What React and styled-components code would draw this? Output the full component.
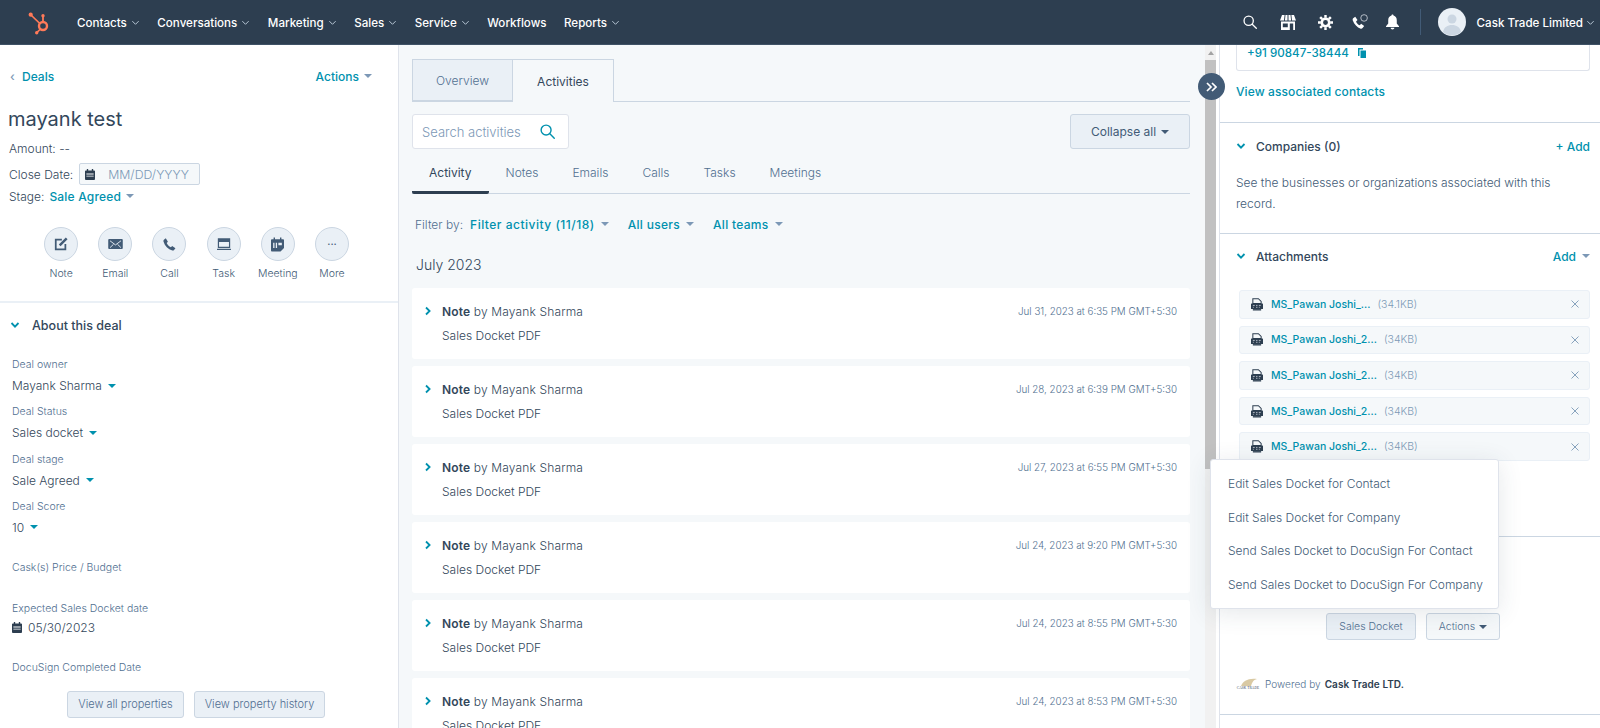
import React from 'react';
import styled, { createGlobalStyle } from 'styled-components';

const navItems = [
  { label: 'Contacts', menu: true },
  { label: 'Conversations', menu: true },
  { label: 'Marketing', menu: true },
  { label: 'Sales', menu: true },
  { label: 'Service', menu: true },
  { label: 'Workflows', menu: false },
  { label: 'Reports', menu: true },
];

const notes = [
  'Jul 31, 2023 at 6:35 PM GMT+5:30',
  'Jul 28, 2023 at 6:39 PM GMT+5:30',
  'Jul 27, 2023 at 6:55 PM GMT+5:30',
  'Jul 24, 2023 at 9:20 PM GMT+5:30',
  'Jul 24, 2023 at 8:55 PM GMT+5:30',
  'Jul 24, 2023 at 8:53 PM GMT+5:30',
];

const files = [
  { name: 'MS_Pawan Joshi_...', size: '(34.1KB)' },
  { name: 'MS_Pawan Joshi_2...', size: '(34KB)' },
  { name: 'MS_Pawan Joshi_2...', size: '(34KB)' },
  { name: 'MS_Pawan Joshi_2...', size: '(34KB)' },
  { name: 'MS_Pawan Joshi_2...', size: '(34KB)' },
];

const menuItems = [
  'Edit Sales Docket for Contact',
  'Edit Sales Docket for Company',
  'Send Sales Docket to DocuSign For Contact',
  'Send Sales Docket to DocuSign For Company',
];

const Chevron = ({ size = 9, color = '#b8c7d6' }) => (
  <svg width={size} height={size} viewBox="0 0 10 10" fill="none" stroke={color} strokeWidth="1.1">
    <path d="M1.5 3.5 5 7l3.5-3.5" />
  </svg>
);

const BoldChevron = ({ right }) => (
  <svg width="10" height="10" viewBox="0 0 10 10" fill="none" stroke="#0091ae" strokeWidth="1.8" style={right ? { transform: 'rotate(-90deg)' } : undefined}>
    <path d="M1.5 3 5 6.6 8.5 3" />
  </svg>
);

const CalendarIcon = () => (
  <svg width="10" height="11" viewBox="0 0 11 12" fill="#2d3e50">
    <path d="M2 0h1.5v1.5h4V0H9v1.5h1a1 1 0 0 1 1 1V11a1 1 0 0 1-1 1H1a1 1 0 0 1-1-1V2.500a1 1 0 0 1 1-1h1z" />
    <path fill="#fff" d="M1.500 5h8v1h-8zM1.500 7.500h8v.8h-8z" />
  </svg>
);

const HubspotLogo = () => (
  <svg width="24" height="26" viewBox="0 0 24 26" fill="none" stroke="#ff7a59">
    <circle cx="16" cy="17" r="4" strokeWidth="2.400" />
    <path d="M16 12V7" strokeWidth="1.800" />
    <circle cx="16" cy="6.700" r="1.700" fill="#ff7a59" stroke="none" />
    <path d="M12.800 14.500 4 6" strokeWidth="1.700" />
    <circle cx="3.700" cy="5.700" r="2.100" fill="#ff7a59" stroke="none" />
    <path d="M13 20.500 9.700 23.700" strokeWidth="1.700" />
    <circle cx="9.700" cy="23.700" r="1.700" fill="#ff7a59" stroke="none" />
  </svg>
);

const SearchIcon = ({ color = '#fff', size = 14 }) => (
  <svg width={size} height={size} viewBox="0 0 16 16" fill="none" stroke={color} strokeWidth="1.500">
    <circle cx="6.500" cy="6.500" r="5.300" />
    <path d="m10.500 10.500 4.700 4.700" strokeLinecap="round" />
  </svg>
);

const StoreIcon = () => (
  <svg width="16" height="15" viewBox="0 0 16 15" fill="#fff">
    <path d="M2 0h2.600L4 5.400H0zM5.500 0h2v5.400h-2.600zM8.500 0h2l.6 5.400H8.500zM11.400 0H14l2 5.400h-4z" />
    <path fillRule="evenodd" d="M1 6.400h14V15H1zM2.800 8.400v3.800h5V8.400zm7 0V15h3.400V8.400z" />
  </svg>
);

const GearIcon = () => (
  <svg width="15" height="15" viewBox="0 0 16 16" fill="none" stroke="#fff">
    <circle cx="8" cy="8" r="4" strokeWidth="2.800" />
    <path d="M8 0v3M8 13v3M0 8h3M13 8h3M2.300 2.300l2.200 2.200M11.500 11.500l2.200 2.200M2.300 13.700l2.200-2.200M11.500 4.500l2.200-2.200" strokeWidth="2.600" />
  </svg>
);

const CallingIcon = () => (
  <svg width="17" height="16" viewBox="0 0 18 17">
    <path fill="#fff" d="M1.200 4.600 3.400 3l2.400 3.400-1.500 1.500c.6 1.800 2 3.300 3.900 4l1.500-1.500 3.200 2.400-1.700 2.200c-.5.600-1.300.9-2 .6C5.400 14.200 2.400 11.200.7 6.600c-.2-.7 0-1.500.5-2z" />
    <circle cx="12.800" cy="4.200" r="3.500" fill="none" stroke="#dfe3eb" strokeWidth="0.800" />
  </svg>
);

const BellIcon = () => (
  <svg width="13" height="16" viewBox="0 0 14 16" fill="#fff">
    <path d="M7 0c.7 0 1.100.5 1.100 1.100C10.500 1.700 11.600 3.600 11.600 6v3.500L14 12.500v.8H0v-.8l2.400-3V6c0-2.400 1.100-4.300 3.500-4.900C5.900.5 6.300 0 7 0zM5 14.300h4c0 1-.9 1.700-2 1.700s-2-.7-2-1.700z" />
  </svg>
);

const NoteIcon = () => (
  <svg width="14" height="14" viewBox="0 0 16 16" fill="none" stroke="#425b76" strokeWidth="2">
    <path d="M9 3H2v11h11V8" />
    <path d="M6.500 9.500 14.500 1.500" strokeWidth="2.800" />
  </svg>
);

const EmailIcon = () => (
  <svg width="15" height="10" viewBox="0 0 16 11">
    <rect width="16" height="11" rx="1" fill="#425b76" />
    <path d="M2 2 8 6.500 14 2M2 9.500l3.800-3.700M14 9.500l-3.800-3.700" fill="none" stroke="#eaf0f6" strokeWidth="1" />
  </svg>
);

const PhoneIcon = () => (
  <svg width="13" height="13" viewBox="0 0 14 14" fill="#425b76">
    <path d="M1 1.800 3 .3 5.300 4 4 5.400c.7 1.900 2.500 3.800 4.500 4.600l1.400-1.400 3.500 2.400-1.500 1.900c-.4.600-1.100.8-1.800.6C5.400 12 2 8.700.5 3.700.3 3 .5 2.300 1 1.800z" />
  </svg>
);

const TaskIcon = () => (
  <svg width="14" height="13" viewBox="0 0 15 14" fill="none">
    <path d="M1.500 1h12v9h-12z" stroke="#425b76" strokeWidth="1.300" />
    <path d="M1.500 1h12v3.200h-12zM0 11.500h15V13H0z" fill="#425b76" />
  </svg>
);

const MeetingIcon = () => (
  <svg width="13" height="15" viewBox="0 0 15 16" fill="#425b76">
    <path d="M3 0h1.600v2h5.800V0H12v2h2a1 1 0 0 1 1 1v9l-4 4H1a1 1 0 0 1-1-1V3a1 1 0 0 1 1-1h2z" />
    <path d="M2.500 6h1.500v6H2.500zM5.500 6H7v6H5.500zM8.500 6h4v3h-4z" fill="#eaf0f6" />
  </svg>
);

const PdfIcon = () => (
  <svg width="12" height="13" viewBox="0 0 13 14">
    <path d="M2 .7h6l3 3V6H2z" fill="none" stroke="#2d3e50" strokeWidth="1.100" />
    <rect y="6" width="13" height="6" rx="0.500" fill="#2d3e50" />
    <path d="M2 12h9v1.500H2z" fill="#2d3e50" />
    <path d="M2 8h2M5.500 8h1.500M8.500 8h2M2 10h1M5.500 10h1.500M8.500 10h1" stroke="#dfe3eb" strokeWidth="0.800" />
  </svg>
);

const CopyIcon = () => (
  <svg width="8" height="10" viewBox="0 0 8 10" fill="#0091ae">
    <path d="M0 0h5v1.500H1.500V8H0z" />
    <path d="M2.500 2.500H8V10H2.500z" />
  </svg>
);

const CloseIcon = () => (
  <svg width="8" height="8" viewBox="0 0 8 8" stroke="#7c98b6" strokeWidth="0.900">
    <path d="m.5.5 7 7M7.500.5l-7 7" />
  </svg>
);

const CollapseIcon = () => (
  <svg width="11" height="10" viewBox="0 0 11 10" fill="none" stroke="#fff" strokeWidth="1.700">
    <path d="m1 1 4 4-4 4M6 1l4 4-4 4" />
  </svg>
);

function Field({ label, value, top, children }) {
  return (
    <FieldBox $top={top}>
      <FieldLabel>{label}</FieldLabel>
      {value && (
        <FieldValue>
          {value}
          <TealCaret />
        </FieldValue>
      )}
      {children}
    </FieldBox>
  );
}

function NoteCard({ time }) {
  return (
    <Card>
      <CardHead>
        <CardArrow>
          <BoldChevron right />
        </CardArrow>
        <CardTitle>
          <b>Note</b> by Mayank Sharma
        </CardTitle>
        <CardTime>{time}</CardTime>
      </CardHead>
      <CardBody>Sales Docket PDF</CardBody>
    </Card>
  );
}

export default function App() {
  const actions = [
    ['Note', <NoteIcon key="n" />],
    ['Email', <EmailIcon key="e" />],
    ['Call', <PhoneIcon key="c" />],
    ['Task', <TaskIcon key="t" />],
    ['Meeting', <MeetingIcon key="m" />],
    ['More', <MoreDots key="d">···</MoreDots>],
  ];

  return (
    <>
      <GlobalStyle />
      <Page>
        <TopNav>
          <LogoSlot>
            <HubspotLogo />
          </LogoSlot>
          <NavList>
            {navItems.map((item) => (
              <NavItem key={item.label}>
                {item.label}
                {item.menu && <Chevron />}
              </NavItem>
            ))}
          </NavList>
          <NavTools>
            <ToolSlot $w={38}>
              <SearchIcon />
            </ToolSlot>
            <ToolSlot $w={38}>
              <StoreIcon />
            </ToolSlot>
            <ToolSlot $w={37}>
              <GearIcon />
            </ToolSlot>
            <ToolSlot $w={34}>
              <CallingIcon />
            </ToolSlot>
            <ToolSlot $w={30}>
              <BellIcon />
            </ToolSlot>
            <ToolSlot $w={26}>
              <NavDivider />
            </ToolSlot>
            <Avatar>
              <svg width="28" height="28" viewBox="0 0 28 28">
                <circle cx="14" cy="11" r="4.500" fill="#cbd6e2" />
                <path d="M5 24c1-5 4.500-7 9-7s8 2 9 7a14 14 0 0 1-18 0z" fill="#cbd6e2" />
              </svg>
            </Avatar>
            <AccountName>
              Cask Trade Limited
              <Chevron />
            </AccountName>
          </NavTools>
        </TopNav>

        <Main>
          <LeftPanel>
            <BackRow>
              <BackLink>
                <span>‹</span> Deals
              </BackLink>
              <LinkMenu>
                Actions <GrayCaret />
              </LinkMenu>
            </BackRow>
            <DealTitle>mayank test</DealTitle>
            <MetaLine>Amount: --</MetaLine>
            <CloseRow>
              Close Date:
              <DateInput>
                <CalendarIcon />
                <span>MM/DD/YYYY</span>
              </DateInput>
            </CloseRow>
            <StageLine>
              Stage: <b>Sale Agreed</b> <GrayCaret />
            </StageLine>
            <ActionRow>
              {actions.map(([label, icon]) => (
                <ActionItem key={label}>
                  <ActionCircle>{icon}</ActionCircle>
                  <ActionLabel>{label}</ActionLabel>
                </ActionItem>
              ))}
            </ActionRow>
            <AboutHead>
              <BoldChevron />
              About this deal
            </AboutHead>
            <Fields>
              <Field label="Deal owner" value="Mayank Sharma" />
              <Field label="Deal Status" value="Sales docket" top={6.3} />
              <Field label="Deal stage" value="Sale Agreed" top={6.3} />
              <Field label="Deal Score" value="10" top={6.3} />
              <Field label="Cask(s) Price / Budget" top={20} />
              <Field label="Expected Sales Docket date" top={21}>
                <DateValue>
                  <CalendarIcon />
                  05/30/2023
                </DateValue>
              </Field>
              <Field label="DocuSign Completed Date" top={20} />
            </Fields>
            <PropertyButtons>
              <GhostButton $w={117}>View all properties</GhostButton>
              <GhostButton $w={131}>View property history</GhostButton>
            </PropertyButtons>
          </LeftPanel>

          <Middle>
            <Tabs>
              <Tab>Overview</Tab>
              <Tab $active>Activities</Tab>
            </Tabs>
            <Toolbar>
              <SearchBox>
                Search activities
                <SearchIcon color="#0091ae" size={15} />
              </SearchBox>
              <CollapseButton>
                Collapse all <DarkCaret />
              </CollapseButton>
            </Toolbar>
            <SubTabs>
              <SubTab $active>Activity</SubTab>
              <SubTab>Notes</SubTab>
              <SubTab>Emails</SubTab>
              <SubTab>Calls</SubTab>
              <SubTab>Tasks</SubTab>
              <SubTab>Meetings</SubTab>
            </SubTabs>
            <FilterRow>
              <FilterLabel>Filter by:</FilterLabel>
              <FilterLink $spacing={0.5}>
                Filter activity (11/18) <GrayCaret />
              </FilterLink>
              <FilterLink $spacing={0.3}>
                All users <GrayCaret />
              </FilterLink>
              <FilterLink $spacing={0.3}>
                All teams <GrayCaret />
              </FilterLink>
            </FilterRow>
            <MonthTitle>July 2023</MonthTitle>
            <CardList>
              {notes.map((time, i) => (
                <NoteCard key={i} time={time} />
              ))}
            </CardList>
          </Middle>

          <ScrollTrack>
            <ScrollArrow />
            <ScrollThumb />
          </ScrollTrack>

          <RightPanel>
            <CollapseCircle>
              <CollapseIcon />
            </CollapseCircle>
            <ContactSection>
              <ContactBox>
                +91 90847-38444
                <CopyIcon />
              </ContactBox>
              <TealLink>View associated contacts</TealLink>
            </ContactSection>
            <CompaniesSection>
              <SectionHead>
                <SectionTitle>
                  <BoldChevron />
                  Companies (0)
                </SectionTitle>
                <TealLink>+ Add</TealLink>
              </SectionHead>
              <SectionText>See the businesses or organizations associated with this record.</SectionText>
            </CompaniesSection>
            <AttachmentsSection>
              <SectionHead>
                <SectionTitle>
                  <BoldChevron />
                  Attachments
                </SectionTitle>
                <TealLink>
                  Add <GrayCaret />
                </TealLink>
              </SectionHead>
              <FileList>
                {files.map((file, i) => (
                  <FileRow key={i}>
                    <PdfIcon />
                    <FileName>{file.name}</FileName>
                    <FileSize>{file.size}</FileSize>
                    <FileClose>
                      <CloseIcon />
                    </FileClose>
                  </FileRow>
                ))}
              </FileList>
            </AttachmentsSection>
            <WidgetSection>
              <WidgetButtons>
                <WidgetButton $w={90}>Sales Docket</WidgetButton>
                <WidgetButton $w={74} $light>
                  Actions <DarkCaret />
                </WidgetButton>
              </WidgetButtons>
              <Powered>
                <CaskLogo>
                  <svg width="18" height="8" viewBox="0 0 18 8">
                    <path d="M2 8C4 3 9 0 18 1c-4 1-5 4-6 7z" fill="#d9c9a3" />
                  </svg>
                  <span>CASK TRADE</span>
                </CaskLogo>
                Powered by <b>Cask Trade LTD.</b>
              </Powered>
            </WidgetSection>
            <DropMenu>
              {menuItems.map((item) => (
                <DropItem key={item}>{item}</DropItem>
              ))}
            </DropMenu>
          </RightPanel>
        </Main>
      </Page>
    </>
  );
}

const GlobalStyle = createGlobalStyle`
  html, body {
    margin: 0;
    height: 100%;
    overflow: hidden;
    font-family: Inter, "Open Sans", sans-serif;
    font-weight: 300;
    color: #33475b;
    -webkit-font-smoothing: antialiased;
  }
  * {
    box-sizing: border-box;
  }
  b {
    font-weight: 500;
  }
`;

const Page = styled.div`
  width: 1600px;
  height: 728px;
  display: flex;
  flex-direction: column;
  overflow: hidden;
`;

const TopNav = styled.header`
  height: 45px;
  flex: none;
  display: flex;
  align-items: center;
  background: #2d3e50;
  border-bottom: 1px solid #3f5266;
  color: #fff;
`;

const LogoSlot = styled.div`
  width: 76px;
  padding-left: 27px;
  display: flex;
`;

const NavList = styled.nav`
  margin-top: 1px;
  padding-left: 1px;
  display: flex;
  gap: 17.500px;
`;

const NavItem = styled.a`
  display: flex;
  align-items: center;
  gap: 4px;
  font-size: 11.600px;
  font-weight: 500;
  white-space: nowrap;
`;

const NavTools = styled.div`
  margin-left: auto;
  display: flex;
  align-items: center;
  padding-right: 5px;
`;

const ToolSlot = styled.div`
  width: ${(p) => p.$w}px;
  display: flex;
  justify-content: center;
`;

const NavDivider = styled.div`
  width: 1px;
  height: 26px;
  background: #425b76;
`;

const Avatar = styled.div`
  width: 28px;
  height: 28px;
  margin: 0 11px 0 4px;
  border-radius: 50%;
  background: #eaf0f6;
  overflow: hidden;
`;

const AccountName = styled.div`
  margin-top: 1px;
  display: flex;
  align-items: center;
  gap: 3px;
  font-size: 11.600px;
  font-weight: 500;
  white-space: nowrap;
`;

const Main = styled.main`
  flex: 1;
  min-height: 0;
  display: flex;
  overflow: hidden;
`;

const LeftPanel = styled.aside`
  width: 399px;
  flex: none;
  background: #fff;
  border-right: 1px solid #dfe3eb;
`;

const BackRow = styled.div`
  height: 20px;
  margin-top: 21px;
  padding: 0 26px 0 10px;
  display: flex;
  align-items: center;
  justify-content: space-between;
`;

const BackLink = styled.a`
  font-size: 12px;
  font-weight: 500;
  color: #0091ae;

  span {
    margin-right: 4px;
    color: #7c98b6;
  }
`;

const LinkMenu = styled.a`
  display: flex;
  align-items: center;
  gap: 5px;
  font-size: 12px;
  font-weight: 500;
  color: #0091ae;
`;

const Caret = styled.i`
  display: inline-block;
  width: 0;
  height: 0;
  border-left: 4px solid transparent;
  border-right: 4px solid transparent;
  border-top: 4px solid ${(p) => p.$color || '#7c98b6'};
`;

const GrayCaret = () => <Caret $color="#7c98b6" />;
const TealCaret = () => <Caret $color="#0091ae" />;
const DarkCaret = () => <Caret $color="#425b76" />;

const DealTitle = styled.h1`
  height: 28px;
  margin: 19px 0 0 8px;
  font-size: 20px;
  line-height: 28px;
  font-weight: 400;
`;

const MetaLine = styled.div`
  height: 20px;
  margin: 6px 0 0 9px;
  font-size: 12px;
  line-height: 20px;
`;

const CloseRow = styled.div`
  height: 22px;
  margin: 4px 0 0 9px;
  display: flex;
  align-items: center;
  gap: 6px;
  font-size: 12px;
`;

const DateInput = styled.div`
  width: 121px;
  height: 22px;
  padding-left: 5px;
  display: flex;
  align-items: center;
  gap: 13px;
  background: #f5f8fa;
  border: 1px solid #cbd6e2;
  border-radius: 2px;
  color: #7c98b6;
  font-size: 12.300px;
`;

const StageLine = styled.div`
  height: 20px;
  margin: 1px 0 0 9px;
  display: flex;
  align-items: center;
  gap: 5px;
  font-size: 12px;

  b {
    color: #0091ae;
    letter-spacing: 0.2px;
  }
`;

const ActionRow = styled.div`
  height: 97px;
  padding: 21px 0 0 34px;
  display: flex;
  border-bottom: 2px solid #eaf0f6;
`;

const ActionItem = styled.div`
  width: 54.200px;
  height: 56px;
  flex: none;
  display: flex;
  flex-direction: column;
  align-items: center;
`;

const ActionCircle = styled.div`
  width: 34px;
  height: 34px;
  display: flex;
  align-items: center;
  justify-content: center;
  background: #eaf0f6;
  border: 1px solid #cbd6e2;
  border-radius: 50%;
`;

const ActionLabel = styled.div`
  margin-top: 5px;
  font-size: 10.500px;
  line-height: 16px;
  color: #425b76;
  white-space: nowrap;
`;

const MoreDots = styled.span`
  font-size: 11px;
  font-weight: 400;
  color: #425b76;
`;

const AboutHead = styled.h2`
  height: 20px;
  margin: 12px 0 0 10px;
  display: flex;
  align-items: center;
  gap: 12px;
  font-size: 12.500px;
  font-weight: 500;
`;

const Fields = styled.div`
  margin: 20px 0 0 12px;
`;

const FieldBox = styled.div`
  margin-top: ${(p) => p.$top || 0}px;
`;

const FieldLabel = styled.div`
  height: 20px;
  font-size: 10.500px;
  line-height: 20px;
  color: #516f90;
`;

const FieldValue = styled.div`
  height: 21px;
  display: flex;
  align-items: center;
  gap: 6px;
  font-size: 12px;
`;

const DateValue = styled(FieldValue)`
  margin: -2px 0 2px;
`;

const PropertyButtons = styled.div`
  margin: 13px 0 0 67px;
  display: flex;
  gap: 10px;
`;

const GhostButton = styled.button`
  width: ${(p) => p.$w}px;
  height: 27px;
  padding: 0;
  background: #eaf0f6;
  border: 1px solid #cbd6e2;
  border-radius: 3px;
  color: #506e91;
  font: 300 11px Inter, sans-serif;
`;

const Middle = styled.section`
  width: 806px;
  flex: none;
  padding: 14px 15px 0 13px;
  background: #f5f8fa;
`;

const Tabs = styled.div`
  height: 43px;
  display: flex;
  border-bottom: 1px solid #cbd6e2;
`;

const Tab = styled.div`
  width: ${(p) => (p.$active ? 102 : 101)}px;
  height: ${(p) => (p.$active ? 43 : 42)}px;
  display: flex;
  align-items: center;
  justify-content: center;
  font-size: 12px;
  font-weight: ${(p) => (p.$active ? 400 : 300)};
  color: ${(p) => (p.$active ? '#33475b' : '#516f90')};
  background: ${(p) => (p.$active ? '#f5f8fa' : '#eaf0f6')};
  border: 1px solid #cbd6e2;
  border-bottom: ${(p) => (p.$active ? 'none' : '1px solid #cbd6e2')};
  margin-left: ${(p) => (p.$active ? '-1px' : 0)};
`;

const Toolbar = styled.div`
  height: 35px;
  margin-top: 12px;
  display: flex;
  justify-content: space-between;
`;

const SearchBox = styled.div`
  width: 157px;
  height: 35px;
  padding: 0 13px 0 9px;
  display: flex;
  align-items: center;
  justify-content: space-between;
  background: #fff;
  border: 1px solid #dfe3eb;
  border-radius: 3px;
  color: #7c98b6;
  font-size: 13px;
  white-space: nowrap;
`;

const CollapseButton = styled.button`
  width: 120px;
  height: 35px;
  padding: 0;
  display: flex;
  align-items: center;
  justify-content: center;
  gap: 5px;
  background: #eaf0f6;
  border: 1px solid #cbd6e2;
  border-radius: 3px;
  color: #425b76;
  font: 400 12px Inter, sans-serif;
`;

const SubTabs = styled.div`
  height: 45px;
  padding-bottom: 1px;
  display: flex;
  border-bottom: 1px solid #cbd6e2;
`;

const SubTab = styled.div`
  height: 45px;
  padding: 15px 17px 0;
  font-size: 12px;
  line-height: 18px;
  color: ${(p) => (p.$active ? '#33475b' : '#516f90')};
  font-weight: ${(p) => (p.$active ? 400 : 300)};
  border-bottom: 3px solid ${(p) => (p.$active ? '#2d3e50' : 'transparent')};
  border-radius: 0 0 2px 2px;
`;

const FilterRow = styled.div`
  height: 20px;
  margin-top: 20px;
  padding-left: 3px;
  display: flex;
  align-items: center;
  gap: 19px;
  font-size: 12px;
`;

const FilterLabel = styled.span`
  margin-right: -12px;
  color: #516f90;
`;

const FilterLink = styled.a`
  display: flex;
  align-items: center;
  gap: 6px;
  color: #0091ae;
  font-weight: 500;
  letter-spacing: ${(p) => p.$spacing}px;
`;

const MonthTitle = styled.h3`
  height: 20px;
  margin: 21px 0 0 4px;
  font-size: 14px;
  line-height: 20px;
  font-weight: 300;
`;

const CardList = styled.div`
  margin-top: 13px;
  display: flex;
  flex-direction: column;
  gap: 7px;
`;

const Card = styled.article`
  height: 71px;
  flex: none;
  padding: 14px 13px 0 11px;
  background: #fff;
  border-radius: 3px;
`;

const CardHead = styled.div`
  height: 18px;
  display: flex;
  align-items: center;
`;

const CardArrow = styled.span`
  width: 19px;
  display: flex;
`;

const CardTitle = styled.div`
  font-size: 12px;
  letter-spacing: 0.15px;
  b {
    font-weight: 600;
  }
`;

const CardTime = styled.div`
  margin-left: auto;
  font-size: 9.800px;
  color: #516f90;
`;

const CardBody = styled.div`
  margin: 7px 0 0 19px;
  font-size: 12px;
  line-height: 18px;
`;

const ScrollTrack = styled.div`
  width: 11px;
  flex: none;
  margin-right: 3px;
  background: #f1f1f1;
`;

const ScrollArrow = styled.div`
  height: 15px;
  display: flex;
  justify-content: center;
  padding-top: 6px;

  &::before {
    content: '';
    border-left: 3px solid transparent;
    border-right: 3px solid transparent;
    border-bottom: 4px solid #a3a3a3;
    height: 0;
  }
`;

const ScrollThumb = styled.div`
  height: 409px;
  background: #c1c1c1;
`;

const RightPanel = styled.aside`
  position: relative;
  flex: 1;
  background: #fff;
  border-left: 1px solid #dfe3eb;
`;

const CollapseCircle = styled.button`
  position: absolute;
  left: -22px;
  top: 28px;
  width: 27px;
  height: 27px;
  padding: 0;
  display: flex;
  align-items: center;
  justify-content: center;
  background: #425b76;
  border: none;
  border-radius: 50%;
`;

const ContactSection = styled.div`
  height: 78px;
  padding: 0 10px 0 16px;
  border-bottom: 1px solid #cbd6e2;
`;

const ContactBox = styled.div`
  height: 26px;
  padding: 0 0 9px 10px;
  display: flex;
  align-items: center;
  gap: 9px;
  border: 1px solid #dfe3eb;
  border-top: none;
  border-radius: 0 0 3px 3px;
  color: #0091ae;
  font-size: 11.600px;
  font-weight: 500;
`;

const TealLink = styled.a`
  display: flex;
  align-items: center;
  gap: 6px;
  color: #0091ae;
  font-size: 12px;
  font-weight: 500;

  ${ContactBox} + & {
    margin-top: 12px;
    line-height: 18px;
    letter-spacing: 0.1px;
  }
`;

const CompaniesSection = styled.div`
  height: 111px;
  padding: 13px 10px 0 16px;
  border-bottom: 1px solid #cbd6e2;
`;

const SectionHead = styled.div`
  height: 20px;
  display: flex;
  align-items: center;
  justify-content: space-between;
`;

const SectionTitle = styled.h2`
  margin: 0;
  display: flex;
  align-items: center;
  gap: 10px;
  font-size: 12px;
  font-weight: 500;
`;

const SectionText = styled.p`
  margin: 16px 0 0;
  font-size: 12px;
  line-height: 21px;
  color: #425b76;
`;

const AttachmentsSection = styled.div`
  height: 303px;
  padding: 12px 10px 0 16px;
  border-bottom: 1px solid #cbd6e2;
`;

const FileList = styled.div`
  margin: 24px 0 0 3px;
  display: flex;
  flex-direction: column;
  gap: 7px;
`;

const FileRow = styled.div`
  height: 28.600px;
  padding: 0 10px 0 11px;
  display: flex;
  align-items: center;
  background: #f5f8fa;
  border: 1px solid #eaf0f6;
  border-radius: 3px;
`;

const FileName = styled.span`
  margin-left: 8px;
  color: #0091ae;
  font-size: 10.500px;
  font-weight: 500;
  white-space: nowrap;
`;

const FileSize = styled.span`
  margin-left: 7px;
  color: #7c98b6;
  font-size: 10.500px;
`;

const FileClose = styled.span`
  margin-left: auto;
  display: flex;
`;

const WidgetSection = styled.div`
  height: 178px;
  padding: 76px 10px 0 16px;
  border-bottom: 1px solid #cbd6e2;
`;

const WidgetButtons = styled.div`
  display: flex;
  justify-content: center;
  gap: 10px;
`;

const WidgetButton = styled.button`
  width: ${(p) => p.$w}px;
  height: 27px;
  padding: 0;
  display: flex;
  align-items: center;
  justify-content: center;
  gap: 4px;
  background: ${(p) => (p.$light ? '#f5f8fa' : '#eaf0f6')};
  border: 1px solid #cbd6e2;
  border-radius: 3px;
  color: #516f90;
  font: 300 10.500px Inter, sans-serif;
`;

const Powered = styled.div`
  margin: 38px 0 0 -1px;
  display: flex;
  align-items: center;
  gap: 4px;
  font-size: 10px;
  letter-spacing: 0.05px;
  color: #516f90;
  white-space: nowrap;

  b {
    color: #2d3e50;
    font-weight: 600;
  }
`;

const CaskLogo = styled.div`
  width: 26px;
  display: flex;
  flex-direction: column;
  align-items: center;

  span {
    font-family: 'Liberation Serif', serif;
    font-size: 3.500px;
    font-weight: 400;
    color: #33475b;
  }
`;

const DropMenu = styled.div`
  position: absolute;
  left: -10px;
  top: 414px;
  width: 289px;
  height: 150px;
  padding: 7px 0;
  display: flex;
  flex-direction: column;
  justify-content: space-around;
  background: #fff;
  border: 1px solid #dfe3eb;
  border-radius: 3px;
  box-shadow: 0 4px 24px rgba(45, 62, 80, 0.12);
`;

const DropItem = styled.div`
  padding-left: 17px;
  font-size: 12px;
  color: #425b76;
  white-space: nowrap;
`;
